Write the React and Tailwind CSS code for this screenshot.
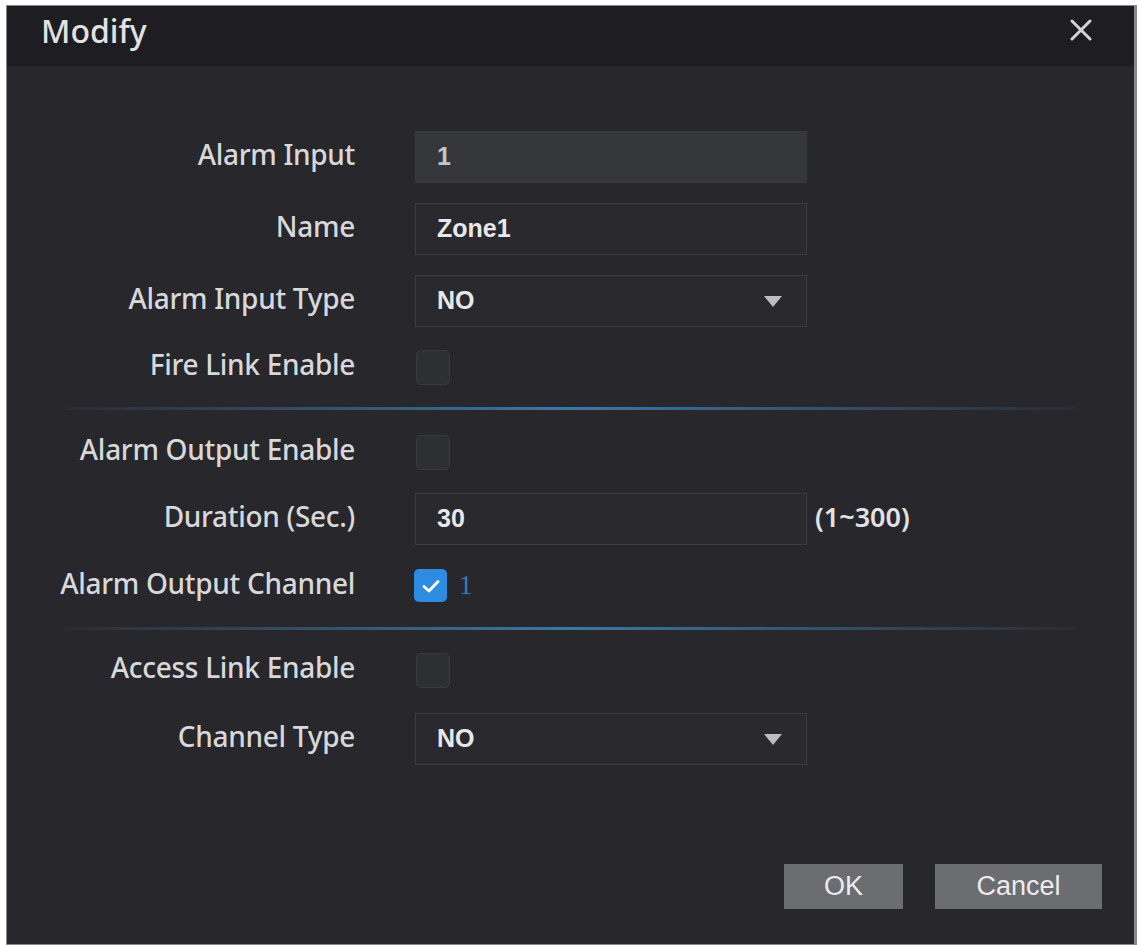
import { useState } from "react";

const labelFont = { fontFamily: '"Noto Sans", "DejaVu Sans", sans-serif' };

function Label({ children }) {
  return (
    <div
      className="w-[348px] shrink-0 text-right text-[28px] font-medium tracking-[-0.3px] text-[#d8d8da] mt-[-6px]"
      style={labelFont}
    >
      {children}
    </div>
  );
}

function TextBox({ value, disabled }) {
  return (
    <div
      className={`w-[392px] h-[52px] flex items-center px-[21px] border text-[25px] font-bold ${
        disabled
          ? "bg-[#36373b] border-[#3a3b3f] text-[#c4c4c6]"
          : "bg-[#29292e] border-[#3d3e43] text-[#e8e8ea]"
      }`}
    >
      {value}
    </div>
  );
}

function Select({ value }) {
  return (
    <div className="w-[392px] h-[52px] flex items-center justify-between pl-[21px] pr-[24px] border bg-[#29292e] border-[#3d3e43] text-[25px] font-bold text-[#e8e8ea]">
      <span>{value}</span>
      <svg width="18" height="11" viewBox="0 0 18 11">
        <path d="M0 0 H18 L9 11 Z" fill="#bdbdc0" />
      </svg>
    </div>
  );
}

function Check({ checked }) {
  if (checked) {
    return (
      <div className="w-[33px] h-[33px] rounded-[5px] bg-[#2d8ce2] flex items-center justify-center">
        <svg width="20" height="16" viewBox="0 0 20 16" fill="none">
          <path d="M3 8.5 L8 13 L17 3.5" stroke="#ffffff" strokeWidth="3" strokeLinecap="round" strokeLinejoin="round" />
        </svg>
      </div>
    );
  }
  return <div className="w-[34px] h-[35px] rounded-[5px] bg-[#2e2f33] border border-[#3a3b40]" />;
}

function Divider({ className }) {
  return (
    <div
      className={`mx-[58px] h-[3px] bg-gradient-to-r from-[#2b2d33] via-[#3a78a6] to-[#2b2d33] ${className}`}
    />
  );
}

export default function App() {
  const [channelOn] = useState(true);

  return (
    <div
      className="w-[1137px] h-[945px] bg-white pl-[6px] pt-[5px]"
      style={{ fontFamily: '"Liberation Sans", Arial, sans-serif' }}
    >
      <div className="w-[1131px] h-[940px] border border-[#8a8a8d] border-r-[3px] bg-[#27272c] flex flex-col">
        {/* Header */}
        <div className="h-[60px] shrink-0 bg-[#1e1e22] flex items-center justify-between pl-[34px] pr-[42px]">
          <span className="text-[32px] text-[#e2e2e4] font-medium mt-[-10px]" style={labelFont}>
            Modify
          </span>
          <svg width="22" height="22" viewBox="0 0 22 22" className="mt-[-12px]">
            <path d="M2 2 L20 20 M20 2 L2 20" stroke="#d4d4d6" strokeWidth="3" strokeLinecap="round" />
          </svg>
        </div>

        {/* Form */}
        <div className="flex flex-col flex-1">
          <div className="mt-[65px] flex items-center gap-[60px]">
            <Label>Alarm Input</Label>
            <TextBox value="1" disabled />
          </div>
          <div className="mt-[20px] flex items-center gap-[60px]">
            <Label>Name</Label>
            <TextBox value="Zone1" />
          </div>
          <div className="mt-[20px] flex items-center gap-[60px]">
            <Label>Alarm Input Type</Label>
            <Select value="NO" />
          </div>
          <div className="mt-[22px] h-[36px] flex items-center gap-[61px]">
            <Label>Fire Link Enable</Label>
            <Check />
          </div>

          <Divider className="mt-[22px]" />

          <div className="mt-[24px] h-[36px] flex items-center gap-[61px]">
            <Label>Alarm Output Enable</Label>
            <Check />
          </div>
          <div className="mt-[23px] flex items-center gap-[60px]">
            <Label>Duration (Sec.)</Label>
            <TextBox value="30" />
            <span
              className="ml-[-52px] text-[27px] font-semibold text-[#e2e2e4] mt-[-4px]"
              style={labelFont}
            >
              (1~300)
            </span>
          </div>
          <div className="mt-[23px] h-[35px] flex items-center gap-[59px]">
            <Label>Alarm Output Channel</Label>
            <div className="flex items-center gap-[12px]">
              <Check checked={channelOn} />
              <span
                className="text-[27px] text-[#2f7bbd]"
                style={{ fontFamily: '"Liberation Serif", serif' }}
              >
                1
              </span>
            </div>
          </div>

          <Divider className="mt-[24px]" />

          <div className="mt-[22px] h-[36px] flex items-center gap-[61px]">
            <Label>Access Link Enable</Label>
            <Check />
          </div>
          <div className="mt-[25px] flex items-center gap-[60px]">
            <Label>Channel Type</Label>
            <Select value="NO" />
          </div>

          {/* Buttons */}
          <div className="mt-[99px] flex justify-end gap-[32px] pr-[32px]">
            <button className="w-[119px] h-[45px] bg-[#6c6d71] text-[#ececee] text-[27px]">OK</button>
            <button className="w-[167px] h-[45px] bg-[#6c6d71] text-[#ececee] text-[27px]">Cancel</button>
          </div>
        </div>
      </div>
    </div>
  );
}
